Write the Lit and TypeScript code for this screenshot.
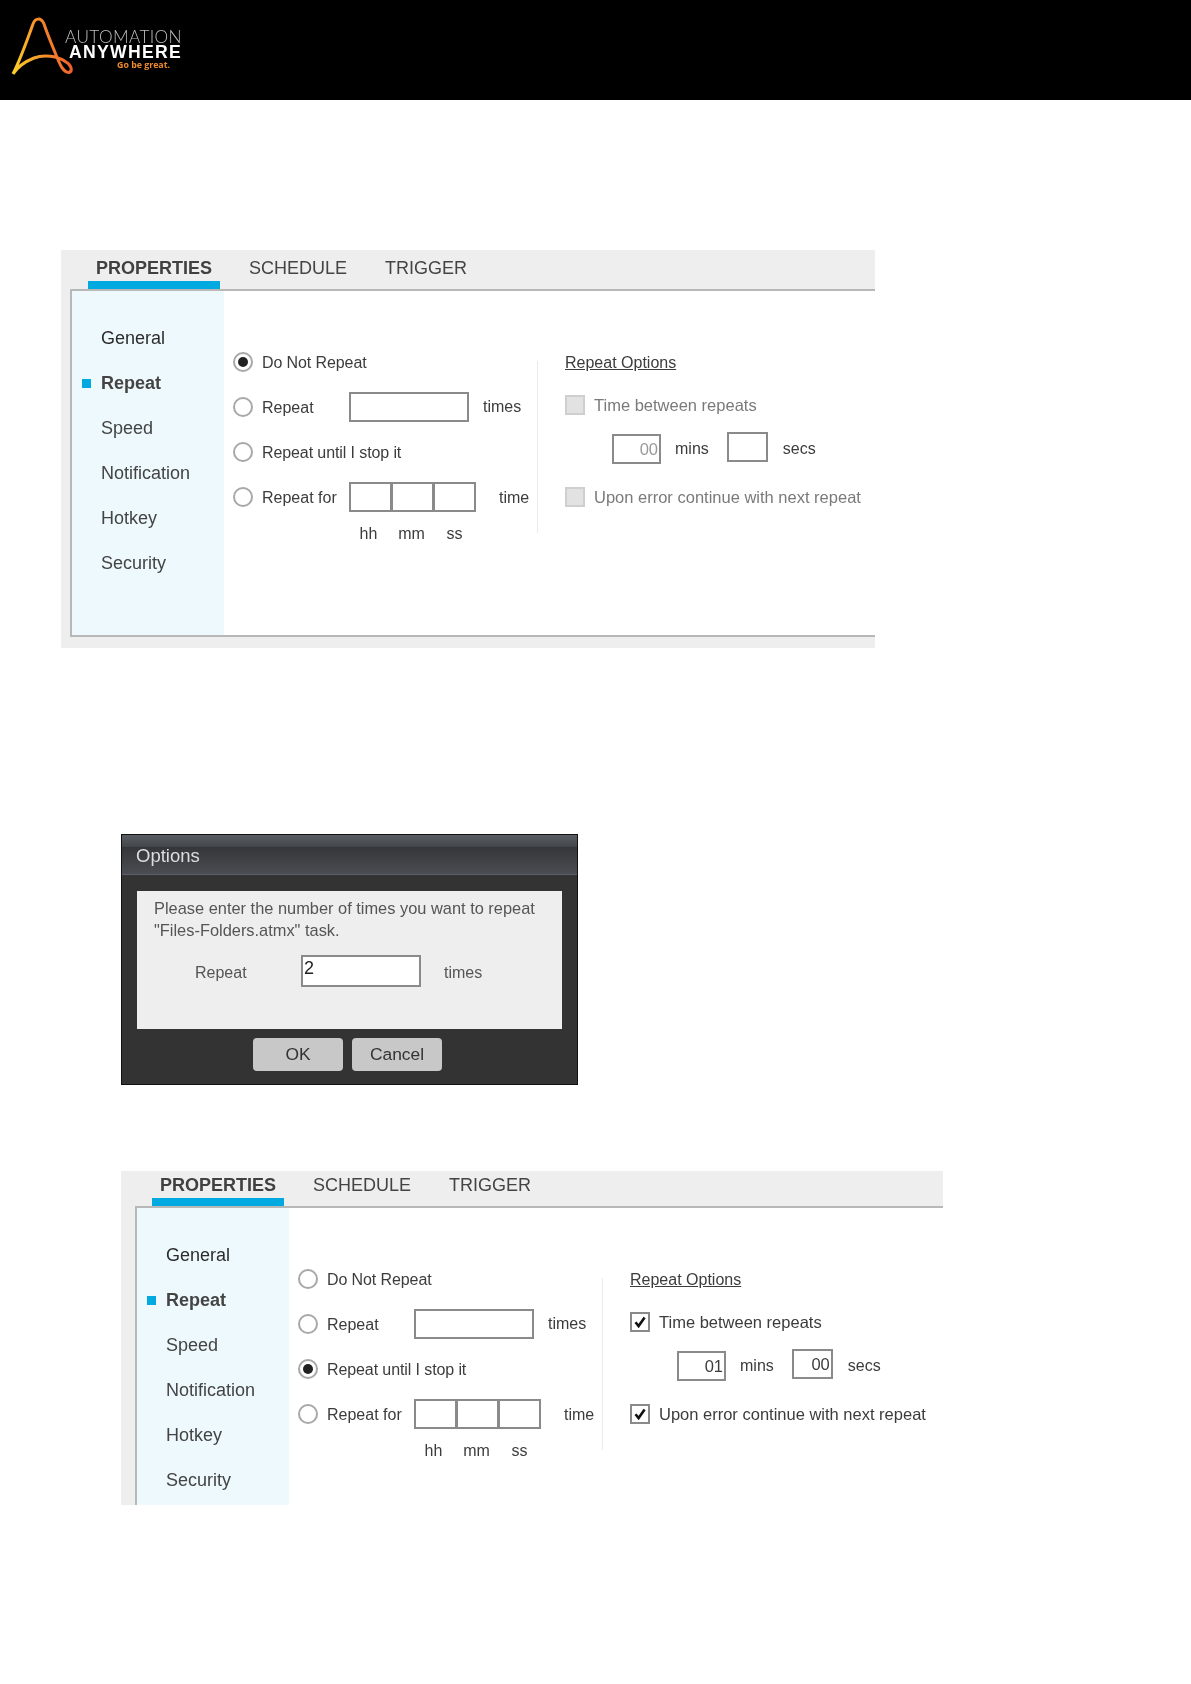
import { LitElement, html, css, svg } from "lit";
import { customElement, property } from "lit/decorators.js";

@customElement("repeat-panel")
class RepeatPanel extends LitElement {
  @property({ type: Boolean }) second = false;

  static styles = css`
    :host { display: block; font-family: "Liberation Sans", Arial, sans-serif; color: #3c3c3c; }
    .panel { background: #eee; width: 814px; padding-bottom: 11px; }
    .panel.second { width: 822px; padding-bottom: 0; }
    .strip { height: 39px; display: flex; align-items: flex-end; gap: 21px; padding-left: 27px; box-sizing: border-box; }
    .second .strip { height: 35px; padding-left: 31px; }
    .tab { font-size: 18px; line-height: 26px; padding: 0 8px 8px; color: #444; }
    .tab.on { font-weight: 700; border-bottom: 8px solid #00a9e0; padding-bottom: 0; color: #404040; }
    .tab:last-child { margin-left: 1px; }
    .body { margin-left: 9px; height: 348px; box-sizing: border-box; background: #fff; border: 2px solid #b8b8b8; border-right: 0; display: flex; }
    .second .body { margin-left: 14px; height: 299px; border-bottom: 0; overflow: hidden; }
    .side { width: 152px; flex: none; background: #eef9fd; padding-top: 25px; box-sizing: border-box; }
    .item { height: 45px; display: flex; align-items: center; padding-left: 29px; font-size: 18px; color: #444; position: relative; }
    .item.first { color: #2c2c2c; }
    .item.on { font-weight: 700; }
    .item.on::before { content: ""; position: absolute; left: 10px; top: 18px; width: 9px; height: 9px; background: #00a9e0; }
    .form { display: flex; padding: 48px 0 0 9px; font-size: 16px; }
    .left { width: 304px; flex: none; }
    .row { height: 45px; display: flex; align-items: center; position: relative; }
    .radio { width: 20px; height: 20px; box-sizing: border-box; border: 2px solid #a8a8a8; border-radius: 50%; flex: none; display: flex; align-items: center; justify-content: center; margin-right: 9px; }
    .radio.on::after { content: ""; width: 10px; height: 10px; border-radius: 50%; background: #222; }
    .txt { padding-top: 2px; white-space: nowrap; letter-spacing: -0.1px; }
    .lbl { width: 87px; flex: none; white-space: nowrap; padding-top: 2px; }
    .box { border: 2px solid #8a8a8a; box-sizing: border-box; height: 30px; background: #fff; }
    .times { width: 120px; }
    .after { margin-left: 14px; }
    .tri { display: flex; }
    .tri .box { width: 43px; margin-right: -1px; }
    .tri-after { margin-left: 24px; padding-top: 2px; }
    .units { display: flex; margin: 0 0 0 114px; height: 30px; align-items: center; }
    .units span { width: 43px; text-align: center; }
    .rule { width: 1px; flex: none; height: 172px; margin-top: 22px; background: #ecece6; }
    .right { padding-left: 27px; display: grid; grid-template-rows: 48px 36px 52px 44px; align-content: start; }
    .right > div { display: flex; align-items: center; white-space: nowrap; font-size: 16.5px; }
    .right > .head { text-decoration: underline; font-size: 16px; }
    .check { width: 20px; height: 20px; box-sizing: border-box; border: 2px solid #8a8a8a; background: #fff; margin-right: 9px; flex: none; }
    .check svg { display: block; width: 16px; height: 16px; }
    .check.off { background: #e2e2e2; border-color: #cfcfcf; }
    .muted { color: #7a7a7a; }
    .right > .times-row { padding-left: 47px; font-size: 16px; }
    .num { display: flex; align-items: center; justify-content: flex-end; padding-right: 1px; font-size: 16.5px; }
    .mins { width: 49px; }
    .secs { width: 41px; margin-top: -4px; }
    .dim { color: #999; }
    .u1 { margin: 0 18px 0 14px; }
    .u2 { margin-left: 15px; }
  `;

  render() {
    const s = this.second;
    const check = s
      ? html`<span class="check"><svg viewBox="0 0 16 16"><path d="M3.5 8.2 L6.6 12 L12.6 3.6" fill="none" stroke="#111" stroke-width="2.6"/></svg></span>`
      : html`<span class="check off"></span>`;
    return html`
      <div class="panel ${s ? "second" : ""}">
        <div class="strip">
          <div class="tab on">PROPERTIES</div>
          <div class="tab">SCHEDULE</div>
          <div class="tab">TRIGGER</div>
        </div>
        <div class="body">
          <div class="side">
            <div class="item first">General</div>
            <div class="item on">Repeat</div>
            <div class="item">Speed</div>
            <div class="item">Notification</div>
            <div class="item">Hotkey</div>
            <div class="item">Security</div>
          </div>
          <div class="form">
            <div class="left">
              <div class="row"><span class="radio ${s ? "" : "on"}"></span><span class="txt">Do Not Repeat</span></div>
              <div class="row"><span class="radio"></span><span class="lbl">Repeat</span><span class="box times"></span><span class="after">times</span></div>
              <div class="row"><span class="radio ${s ? "on" : ""}"></span><span class="txt">Repeat until I stop it</span></div>
              <div class="row"><span class="radio"></span><span class="lbl">Repeat for</span><span class="tri"><span class="box"></span><span class="box"></span><span class="box"></span></span><span class="tri-after">time</span></div>
              <div class="units"><span>hh</span><span>mm</span><span>ss</span></div>
            </div>
            <div class="rule"></div>
            <div class="right">
              <div class="head">Repeat Options</div>
              <div class="${s ? "" : "muted"}">${check}Time between repeats</div>
              <div class="times-row">
                <span class="box num mins ${s ? "" : "dim"}">${s ? "01" : "00"}</span><span class="u1">mins</span><span class="box num secs">${s ? "00" : ""}</span><span class="u2">secs</span>
              </div>
              <div class="${s ? "" : "muted"}">${check}Upon error continue with next repeat</div>
            </div>
          </div>
        </div>
      </div>
    `;
  }
}

@customElement("app-root")
class AppRoot extends LitElement {
  static styles = css`
    :host { display: block; font-family: "Liberation Sans", Arial, sans-serif; background: #fff; min-height: 1684px; filter: blur(0.35px); }
    .top { height: 100px; background: #000; display: flex; }
    .mark { width: 72px; height: 100px; flex: none; margin-left: 8px; }
    .brand { margin-left: -16px; padding-top: 29px; width: 118px; flex: none; text-align: right; white-space: nowrap; }
    .b1 { font-family: Lato, sans-serif; font-weight: 300; font-size: 17.2px; line-height: 15px; color: #bdbdbd; letter-spacing: 0.4px; }
    .b2 { font-weight: 700; font-size: 17.6px; line-height: 16px; color: #fff; letter-spacing: 1.3px; }
    .b3 { font-family: "Open Sans", sans-serif; font-weight: 700; font-size: 8.8px; line-height: 10px; color: #f08a2c; padding-right: 12px; }
    .one { margin: 150px 0 0 61px; }
    .dlg { margin: 186px 0 0 121px; width: 457px; height: 251px; box-sizing: border-box; background: #333; border: 1px solid #111; }
    .title { height: 40px; box-sizing: border-box; background: linear-gradient(#5a5e64 0, #43464a 30%, #35363a 32%, #4a4d52 100%); color: #ddd; font-size: 18.5px; padding: 10px 0 0 14px; line-height: 22px; border-bottom: 1px solid #5c6066; }
    .content { margin: 16px 15px 0; height: 138px; box-sizing: border-box; background: #eee; padding: 7px 0 0 17px; font-size: 16.4px; line-height: 21.5px; color: #555; }
    .rep { display: flex; align-items: center; margin-top: 14px; font-size: 16px; }
    .l { width: 106px; padding: 3px 0 0 41px; white-space: nowrap; }
    .inp { width: 120px; height: 32px; box-sizing: border-box; border: 2px solid #8a8a8a; background: #fff; color: #222; font-size: 18px; line-height: 22px; padding-left: 1px; margin-right: 23px; }
    .end { padding-top: 3px; }
    .btns { display: flex; justify-content: center; gap: 9px; margin-top: 9px; padding-right: 4px; }
    .btn { width: 90px; height: 33px; border-radius: 4px; background: #c8c8c8; color: #333; font-size: 17.4px; display: flex; align-items: center; justify-content: center; }
    .two { margin: 86px 0 0 121px; }
  `;

  render() {
    return html`
      <div class="top">
        <svg class="mark" viewBox="8 0 72 100">
          <defs>
            <linearGradient id="g" x1="13" y1="74" x2="72" y2="60" gradientUnits="userSpaceOnUse">
              <stop offset="0" stop-color="#fbd02c"/>
              <stop offset="0.5" stop-color="#f79a2a"/>
              <stop offset="1" stop-color="#ee5a2c"/>
            </linearGradient>
          </defs>
          ${svg`<path d="M13 74 C20 60 28 38 33 24 C35 18 41 17 44 24 C48 36 54 50 59 62 C62 69 66 73 69 72.5 C73 71 71.5 65 66 62 C58 56 44 54 34 58 C24 62 18 66 13 74" fill="none" stroke="url(#g)" stroke-width="3"/>`}
        </svg>
        <div class="brand">
          <div class="b1">AUTOMATION</div>
          <div class="b2">ANYWHERE</div>
          <div class="b3">Go be great.</div>
        </div>
      </div>
      <repeat-panel class="one"></repeat-panel>
      <div class="dlg">
        <div class="title">Options</div>
        <div class="content">
          <div>Please enter the number of times you want to repeat<br />"Files-Folders.atmx" task.</div>
          <div class="rep"><span class="l">Repeat</span><span class="inp">2</span><span class="end">times</span></div>
        </div>
        <div class="btns"><div class="btn">OK</div><div class="btn">Cancel</div></div>
      </div>
      <repeat-panel class="two" second></repeat-panel>
    `;
  }
}
